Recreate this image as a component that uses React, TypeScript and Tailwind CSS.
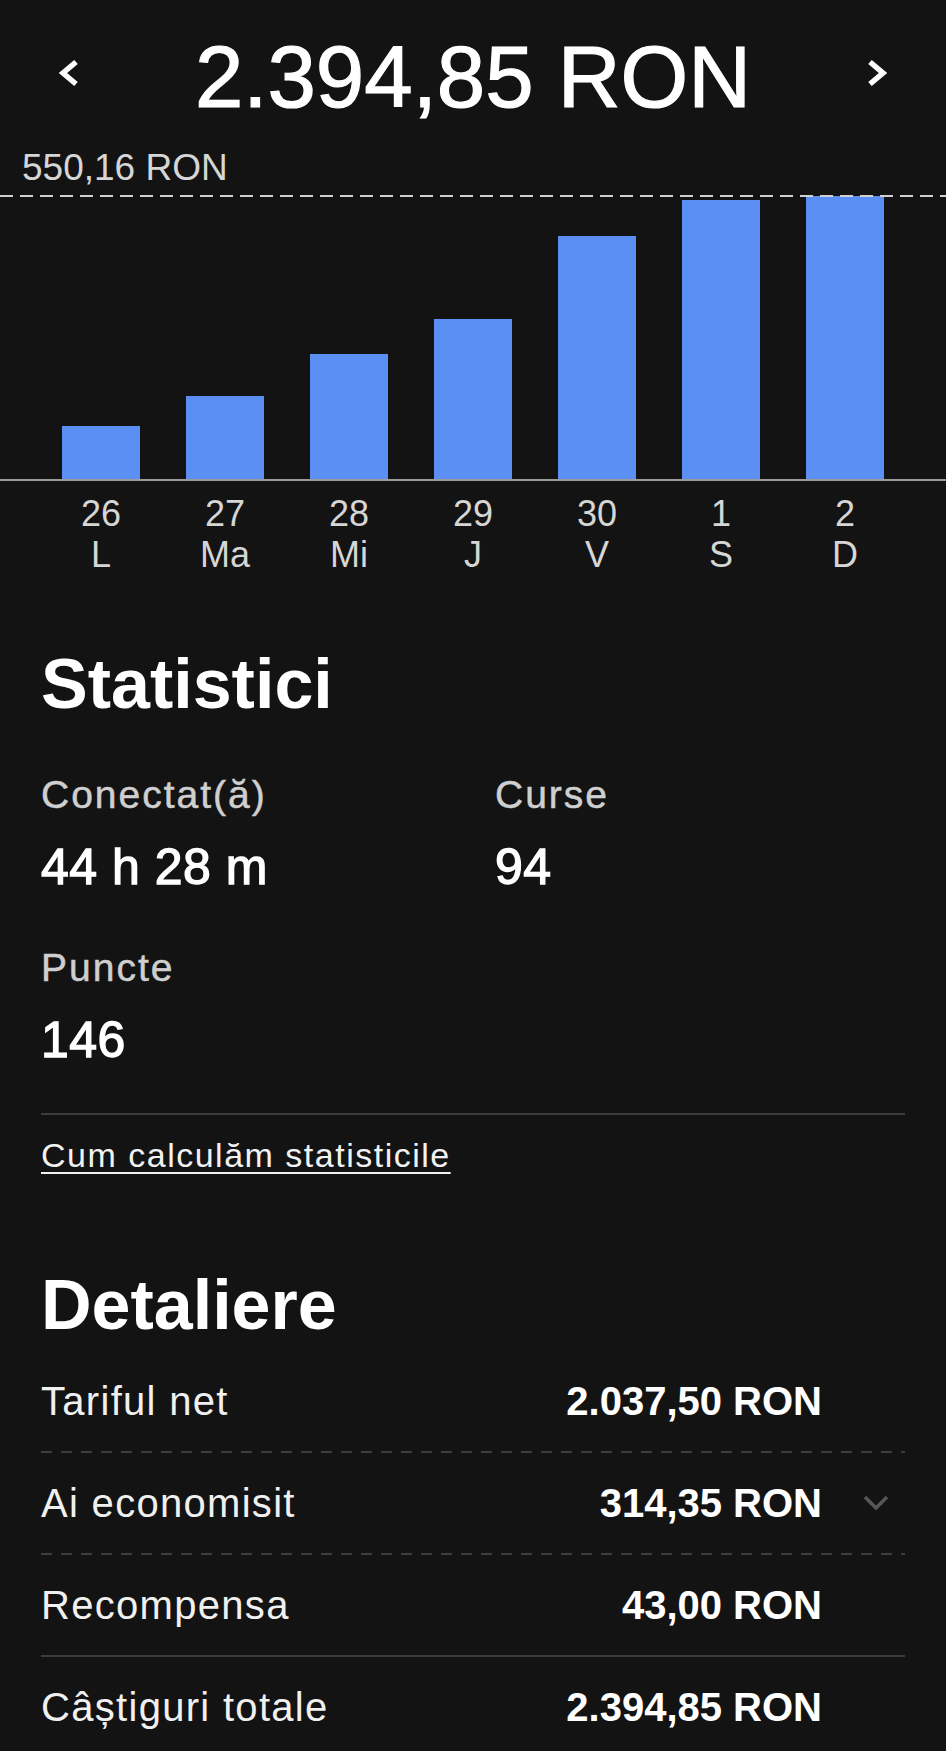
const BARS = [
  { day: '26', label: 'L', height: 53 },
  { day: '27', label: 'Ma', height: 83 },
  { day: '28', label: 'Mi', height: 125 },
  { day: '29', label: 'J', height: 160 },
  { day: '30', label: 'V', height: 243 },
  { day: '1', label: 'S', height: 279 },
  { day: '2', label: 'D', height: 283 },
]

const STATS = [
  { label: 'Conectat(ă)', value: '44 h 28 m' },
  { label: 'Curse', value: '94' },
  { label: 'Puncte', value: '146' },
]

const ROWS = [
  { label: 'Tariful net', value: '2.037,50 RON', chevron: false, divider: 'dashed' },
  { label: 'Ai economisit', value: '314,35 RON', chevron: true, divider: 'dashed' },
  { label: 'Recompensa', value: '43,00 RON', chevron: false, divider: 'solid' },
  { label: 'Câștiguri totale', value: '2.394,85 RON', chevron: false, divider: null },
]

function Chevron({ dir }: { dir: 'left' | 'right' }) {
  return (
    <svg viewBox="0 0 24 30" className="mt-[25px] h-[30px] w-[24px] shrink-0">
      <polyline
        points={dir === 'left' ? '19,4 6,15 19,26' : '5,4 18,15 5,26'}
        fill="none"
        stroke="#ffffff"
        strokeWidth="5.5"
        strokeLinejoin="miter"
      />
    </svg>
  )
}

export default function App() {
  return (
    <div className="h-[1751px] w-[946px] overflow-hidden bg-[#131313] font-['Liberation_Sans',Arial,sans-serif] text-white">
      {/* Header total */}
      <div className="flex items-start px-[57px] pt-[33px]">
        <Chevron dir="left" />
        <div className="flex-1 text-center text-[87px] leading-none [-webkit-text-stroke:1.2px_#ffffff]">2.394,85 RON</div>
        <Chevron dir="right" />
      </div>

      <div className="mt-[29px] pl-[22px] text-[37px] leading-none text-[#d6d6d6]">550,16 RON</div>

      {/* Chart */}
      <div className="relative mt-[9px] h-[284px]">
        <div className="absolute inset-x-0 top-0 z-10 h-[2px] bg-[repeating-linear-gradient(90deg,#d0d0d0_0_13px,transparent_13px_20px)]" />
        <div className="flex h-full items-end gap-[46px] pl-[62px]">
          {BARS.map(b => (
            <div key={b.day} className="w-[78px] bg-[#5b8ff3]" style={{ height: b.height }} />
          ))}
        </div>
      </div>
      <div className="h-[2px] bg-[#9a9a9a]" />

      <div className="mt-[12px] flex gap-[46px] pl-[62px] text-[36px] leading-[41px] text-[#d6d6d6]">
        {BARS.map(b => (
          <div key={b.day} className="flex w-[78px] flex-col items-center">
            <span>{b.day}</span>
            <span>{b.label}</span>
          </div>
        ))}
      </div>

      {/* Statistici */}
      <div className="px-[41px]">
        <h2 className="mt-[74px] text-[70px] font-bold leading-none">Statistici</h2>

        <div className="grid grid-cols-[454px_1fr] gap-y-[56px] pt-[56px]">
          {STATS.map(s => (
            <div key={s.label} className="flex flex-col">
              <span className="text-[39px] leading-none tracking-[2px] text-[#cfcfcf] [-webkit-text-stroke:0.5px_#cfcfcf]">{s.label}</span>
              <span className="mt-[28px] text-[50px] leading-none tracking-[0.5px] [-webkit-text-stroke:1.3px_#ffffff]">{s.value}</span>
            </div>
          ))}
        </div>

        <div className="mt-[48px] h-[2px] bg-[#3c3c3c]" />

        <a className="mt-[23px] block w-fit text-[34px] leading-none tracking-[1.5px] text-[#f2f2f2] underline decoration-2 underline-offset-[5px]">
          Cum calculăm statisticile
        </a>

        {/* Detaliere */}
        <h2 className="mt-[98px] text-[70px] font-bold leading-none">Detaliere</h2>

        <div className="mt-[11px]">
          {ROWS.map(r => (
            <div key={r.label}>
              <div className="flex items-center py-[30px] text-[40px] leading-none">
                <span className="flex-1 tracking-[1.3px] text-[#f0f0f0]">{r.label}</span>
                <span className="font-bold">{r.value}</span>
                <div className="flex w-[83px] justify-end pr-[15px]">
                  {r.chevron && (
                    <svg viewBox="0 0 28 18" className="h-[18px] w-[28px]">
                      <polyline points="3,3 14,14 25,3" fill="none" stroke="#575757" strokeWidth="3.5" />
                    </svg>
                  )}
                </div>
              </div>
              {r.divider === 'dashed' && (
                <div className="h-[2px] bg-[repeating-linear-gradient(90deg,#3d3d3d_0_11px,transparent_11px_20px)]" />
              )}
              {r.divider === 'solid' && <div className="h-[2px] bg-[#3c3c3c]" />}
            </div>
          ))}
        </div>
      </div>
    </div>
  )
}
